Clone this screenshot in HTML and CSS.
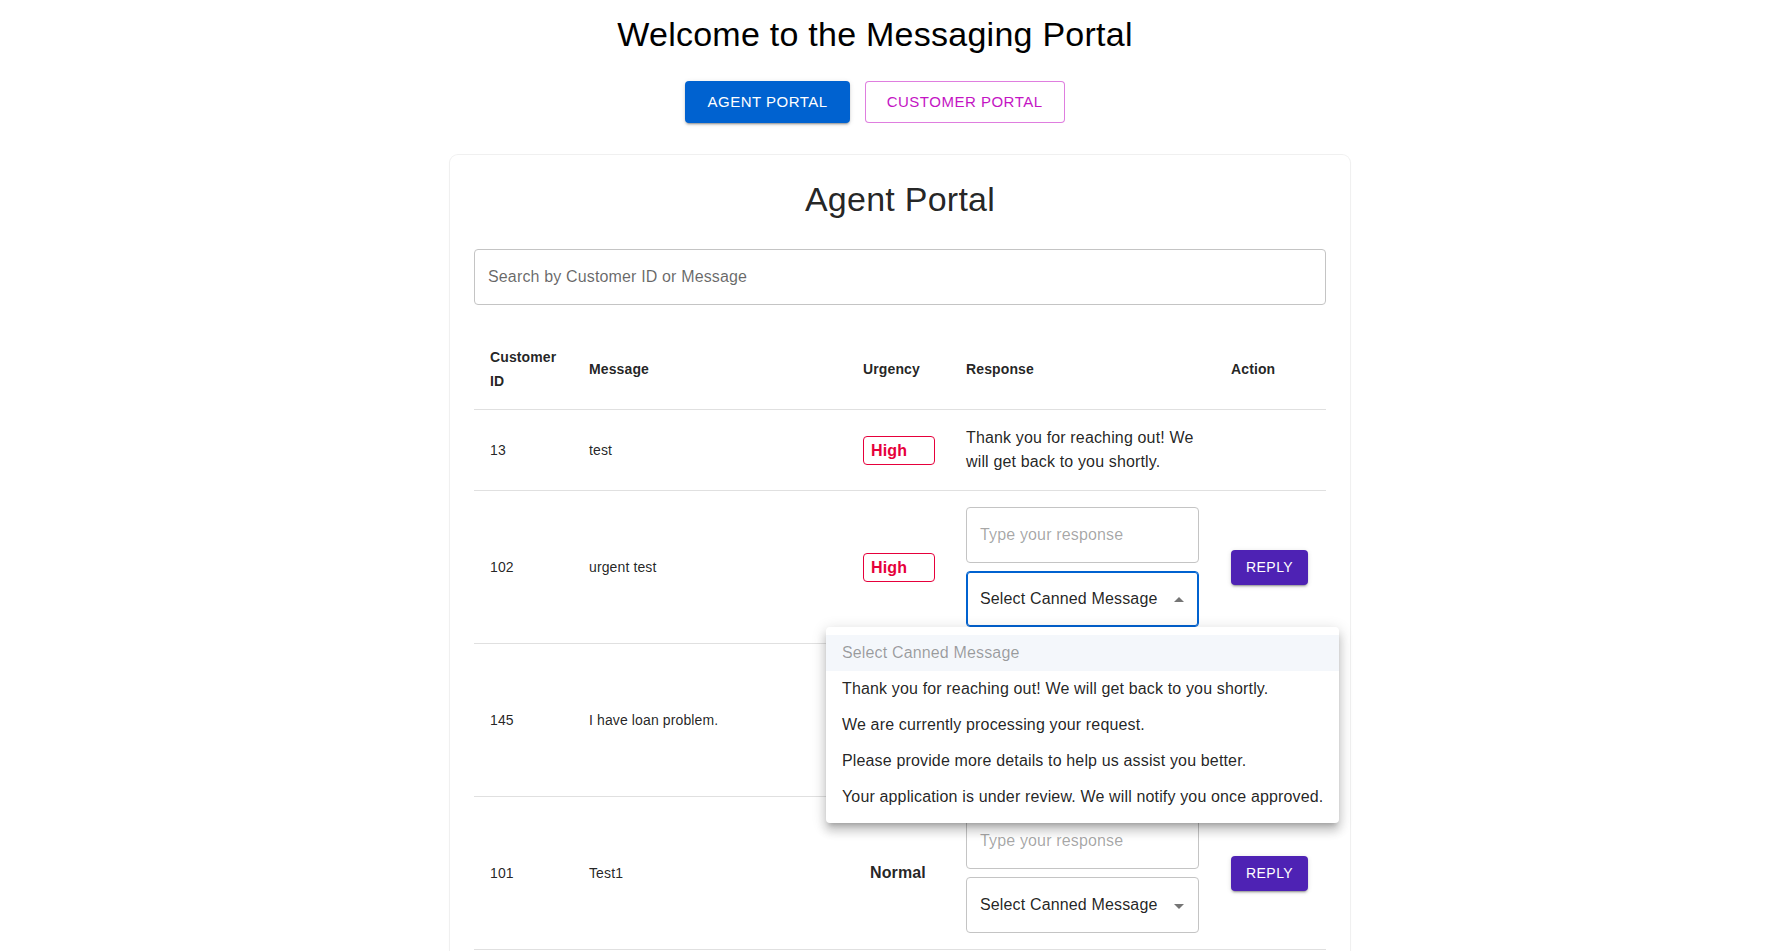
FILE: index.html
```html
<!DOCTYPE html>
<html lang="en">
<head>
<meta charset="utf-8">
<title>Messaging Portal</title>
<link rel="stylesheet" href="styles.css">
</head>
<body>
<header class="top">
  <h1 class="title">Welcome to the Messaging Portal</h1>
  <div class="nav">
    <button class="btn btn-contained">AGENT PORTAL</button>
    <button class="btn btn-outlined">CUSTOMER PORTAL</button>
  </div>
</header>
<main class="wrap">
  <section class="card">
    <h2 class="card-title">Agent Portal</h2>
    <div class="search"><span class="search-label">Search by Customer ID or Message</span></div>
    <table class="grid">
      <colgroup>
        <col class="c-id"><col class="c-msg"><col class="c-urg"><col class="c-resp"><col>
      </colgroup>
      <thead>
        <tr><th>Customer ID</th><th>Message</th><th>Urgency</th><th>Response</th><th>Action</th></tr>
      </thead>
      <tbody>
        <tr>
          <td>13</td><td>test</td>
          <td><span class="chip-high">High</span></td>
          <td><p class="resp-text">Thank you for reaching out! We will get back to you shortly.</p></td>
          <td></td>
        </tr>
        <tr>
          <td>102</td><td>urgent test</td>
          <td><span class="chip-high">High</span></td>
          <td>
            <div class="field"><span class="ph">Type your response</span></div>
            <div class="select focused"><span>Select Canned Message</span>
              <svg class="arrow" viewBox="0 0 24 24" width="24" height="24"><path d="M7 14l5-5 5 5z"/></svg></div>
          </td>
          <td><button class="btn-reply">REPLY</button></td>
        </tr>
        <tr>
          <td>145</td><td>I have loan problem.</td>
          <td><span class="chip-high">High</span></td>
          <td>
            <div class="field"><span class="ph">Type your response</span></div>
            <div class="select"><span>Select Canned Message</span>
              <svg class="arrow" viewBox="0 0 24 24" width="24" height="24"><path d="M7 10l5 5 5-5z"/></svg></div>
          </td>
          <td><button class="btn-reply">REPLY</button></td>
        </tr>
        <tr>
          <td>101</td><td>Test1</td>
          <td><span class="normal">Normal</span></td>
          <td>
            <div class="field"><span class="ph">Type your response</span></div>
            <div class="select"><span>Select Canned Message</span>
              <svg class="arrow" viewBox="0 0 24 24" width="24" height="24"><path d="M7 10l5 5 5-5z"/></svg></div>
          </td>
          <td><button class="btn-reply">REPLY</button></td>
        </tr>
      </tbody>
    </table>
  </section>
</main>
<ul class="menu">
  <li class="menu-item disabled">Select Canned Message</li>
  <li class="menu-item">Thank you for reaching out! We will get back to you shortly.</li>
  <li class="menu-item">We are currently processing your request.</li>
  <li class="menu-item">Please provide more details to help us assist you better.</li>
  <li class="menu-item">Your application is under review. We will notify you once approved.</li>
</ul>
</body>
</html>
```
FILE: styles.css
```css
* { box-sizing: border-box; }
html, body { margin: 0; padding: 0; }
body {
  font-family: "Liberation Sans", Arial, Helvetica, sans-serif;
  color: rgba(0,0,0,0.87);
  background: #fff;
  position: relative;
}
.top {
  padding: 14px 26px 0 0;
  text-align: center;
}
.title {
  margin: 0 0 25px;
  font-size: 34px;
  line-height: 1.235;
  font-weight: 400;
  letter-spacing: 0.25px;
  color: #000;
}
.nav {
  display: flex;
  justify-content: center;
  gap: 15px;
}
.btn {
  font-family: inherit;
  font-size: 15px;
  line-height: 1.75;
  letter-spacing: 0.5px;
  border-radius: 4px;
  cursor: pointer;
}
.btn-contained {
  background: #0062d0;
  color: #fff;
  border: 0;
  padding: 8px 22px;
  box-shadow: 0 3px 1px -2px rgba(0,0,0,0.2), 0 2px 2px 0 rgba(0,0,0,0.14), 0 1px 5px 0 rgba(0,0,0,0.12);
}
.btn-outlined {
  background: #fff;
  color: #c414c4;
  border: 1px solid rgba(196,20,196,0.55);
  padding: 7px 21px;
}
.wrap {
  padding-left: 24px;
  margin-top: 32px;
}
.card {
  width: 900px;
  margin: 0 auto;
  padding: 24px;
  border-radius: 8px;
  background: #fff;
  box-shadow: 0 0 0 1px #f0f0f0, 0 1px 3px rgba(0,0,0,0.04);
}
.card-title {
  margin: 0 0 28px;
  text-align: center;
  font-size: 34px;
  line-height: 1.235;
  font-weight: 400;
  letter-spacing: 0.25px;
}
.search {
  height: 56px;
  border: 1px solid #c4c4c4;
  border-radius: 4px;
  padding: 0 13px;
  display: flex;
  align-items: center;
}
.search-label {
  font-size: 16px;
  letter-spacing: 0.15px;
  color: rgba(0,0,0,0.6);
}
.grid {
  width: 100%;
  table-layout: fixed;
  border-collapse: collapse;
  margin-top: 24px;
}
.c-id { width: 99px; }
.c-msg { width: 274px; }
.c-urg { width: 103px; }
.c-resp { width: 265px; }
.grid th, .grid td {
  padding: 16px;
  border-bottom: 1px solid #e0e0e0;
  text-align: left;
  vertical-align: middle;
  font-size: 14px;
  line-height: 24px;
  letter-spacing: 0.12px;
  color: rgba(0,0,0,0.87);
}
.grid th { font-weight: 700; }
.resp-text {
  margin: 0;
  font-size: 16px;
  line-height: 24px;
  letter-spacing: 0.15px;
}
.chip-high {
  display: inline-block;
  width: 72px;
  height: 29px;
  padding: 0 7px;
  border: 1px solid #e6003b;
  border-radius: 4px;
  color: #e6003b;
  font-weight: 700;
  font-size: 16px;
  line-height: 27px;
}
.normal {
  display: inline-block;
  padding-left: 7px;
  font-weight: 700;
  font-size: 16px;
}
.field, .select {
  height: 56px;
  border: 1px solid #c4c4c4;
  border-radius: 4px;
  display: flex;
  align-items: center;
  padding: 0 32px 0 13px;
  font-size: 16px;
  letter-spacing: 0.15px;
}
.field { margin-bottom: 8px; }
.ph { color: rgba(0,0,0,0.36); }
.select {
  position: relative;
  color: rgba(0,0,0,0.87);
}
.select.focused {
  border-color: #0062d0;
  box-shadow: inset 0 0 0 1px #0062d0;
}
.arrow {
  position: absolute;
  right: 7px;
  top: 16px;
  fill: rgba(0,0,0,0.54);
}
.btn-reply {
  font-family: inherit;
  font-size: 14px;
  line-height: 23px;
  letter-spacing: 0.45px;
  padding: 6px 15px;
  border: 0;
  border-radius: 4px;
  background: #4e22b4;
  color: #fff;
  box-shadow: 0 3px 1px -2px rgba(0,0,0,0.2), 0 2px 2px 0 rgba(0,0,0,0.14), 0 1px 5px 0 rgba(0,0,0,0.12);
}
.menu {
  position: absolute;
  left: 826px;
  top: 627px;
  margin: 0;
  padding: 8px 0;
  list-style: none;
  background: #fff;
  border-radius: 4px;
  box-shadow: 0 5px 5px -3px rgba(0,0,0,0.2), 0 8px 10px 1px rgba(0,0,0,0.14), 0 3px 14px 2px rgba(0,0,0,0.12);
}
.menu-item {
  padding: 6px 16px;
  font-size: 16px;
  line-height: 24px;
  letter-spacing: 0.15px;
  white-space: nowrap;
  color: rgba(0,0,0,0.87);
}
.menu-item.disabled {
  color: rgba(0,0,0,0.38);
  background: #f4f7fb;
}
```
